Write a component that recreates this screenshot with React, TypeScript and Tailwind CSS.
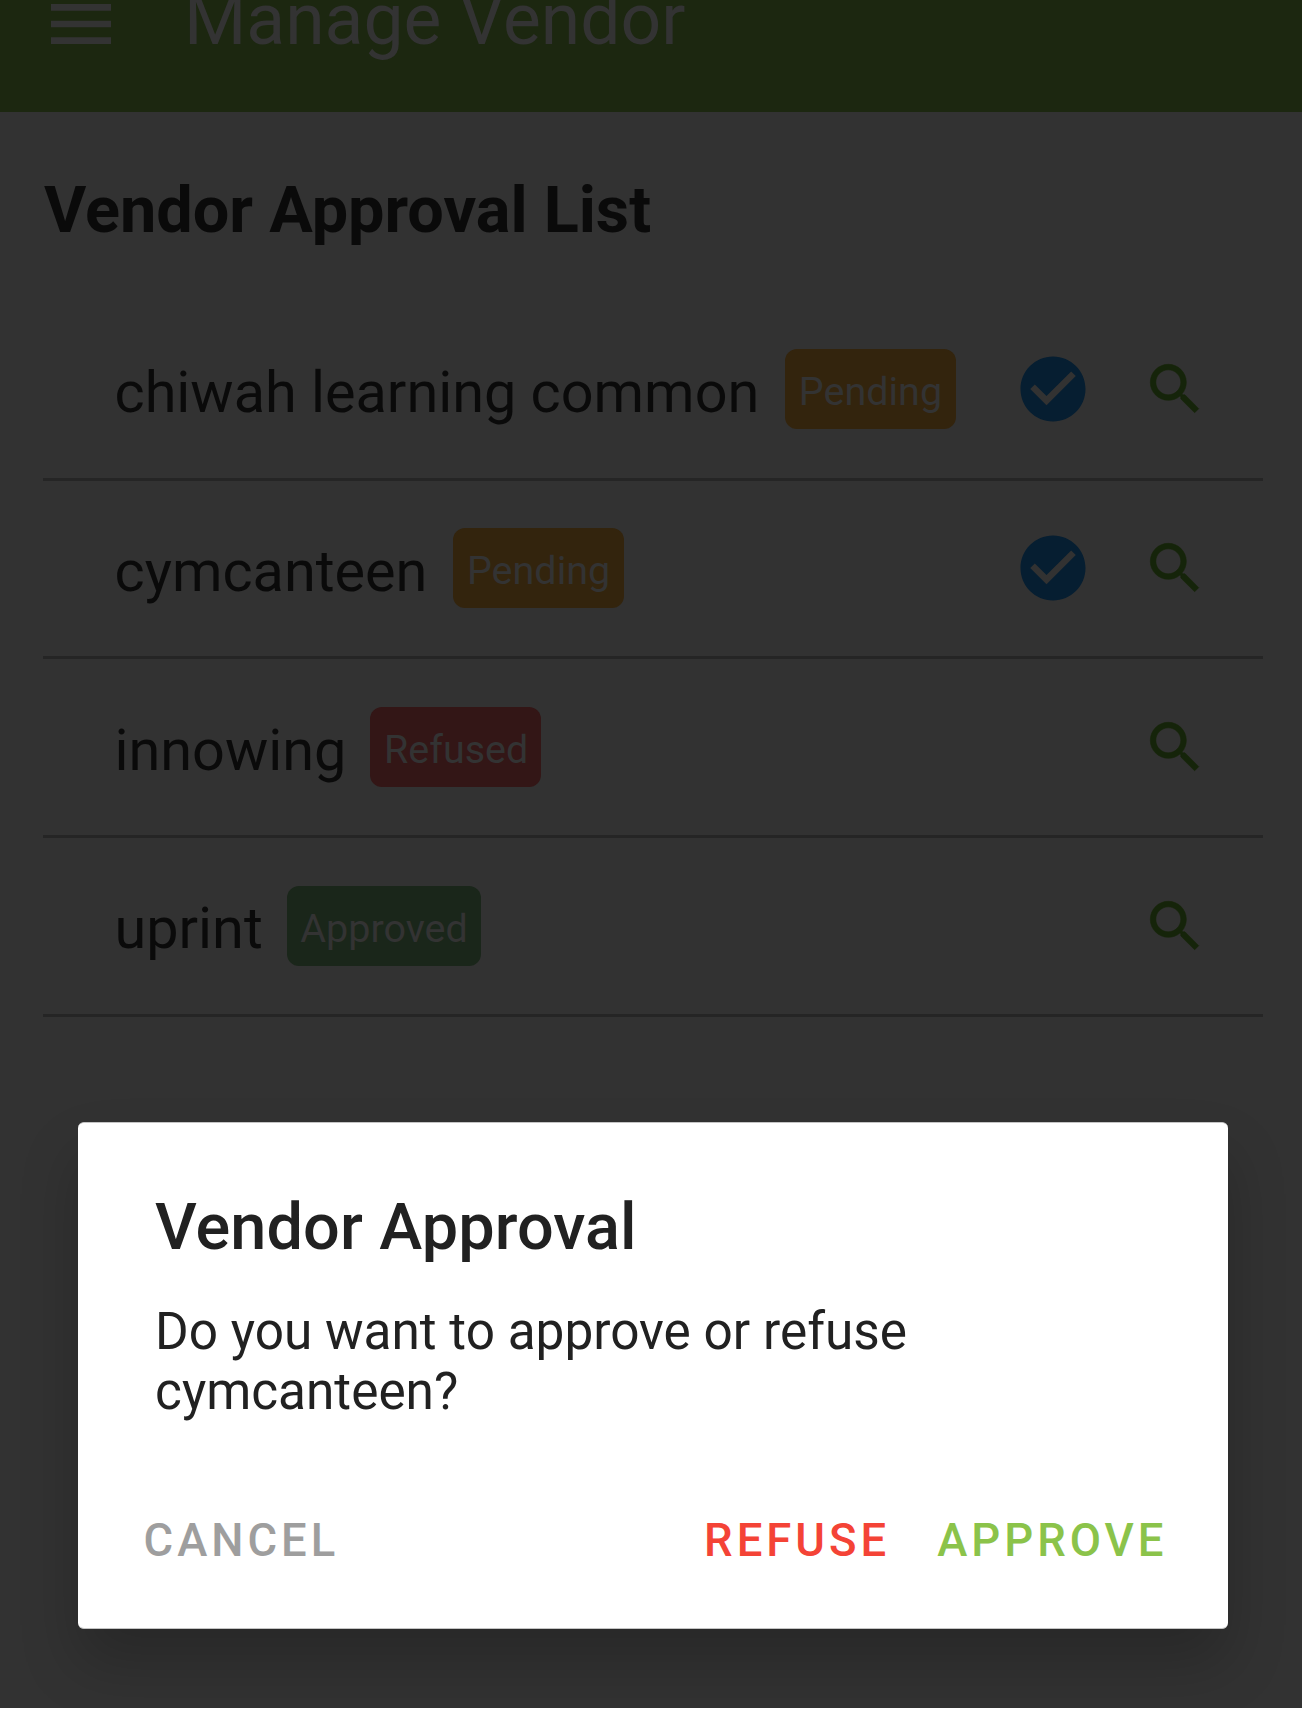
type Status = 'Pending' | 'Refused' | 'Approved';

const vendors: { name: string; status: Status }[] = [
  { name: 'chiwah learning common', status: 'Pending' },
  { name: 'cymcanteen', status: 'Pending' },
  { name: 'innowing', status: 'Refused' },
  { name: 'uprint', status: 'Approved' },
];

const badgeStyles: Record<Status, string> = {
  Pending: 'ml-[26px] w-[171px] bg-[#33240d]',
  Refused: 'ml-[24px] w-[171px] bg-[#331616]',
  Approved: 'ml-[24px] w-[194px] bg-[#1a261a]',
};

function MenuIcon() {
  return (
    <svg viewBox="0 0 24 24" className="size-20 shrink-0 fill-[#333333]">
      <path d="M3 18h18v-2H3v2zm0-5h18v-2H3v2zm0-7v2h18V6H3z" />
    </svg>
  );
}

function CheckCircleIcon() {
  return (
    <svg viewBox="0 0 24 24" className="size-[78px] shrink-0 fill-[#061e31]">
      <path d="M12 2C6.48 2 2 6.48 2 12s4.48 10 10 10 10-4.48 10-10S17.52 2 12 2zm-2 15l-5-5 1.41-1.41L10 14.17l7.59-7.59L19 8l-9 9z" />
    </svg>
  );
}

function SearchIcon() {
  return (
    <svg viewBox="0 0 24 24" className="size-[66.5px] shrink-0 fill-[#15240a] stroke-[#15240a] stroke-[0.2]">
      <path d="M15.5 14h-.79l-.28-.27C15.41 12.59 16 11.11 16 9.5 16 5.91 13.09 3 9.5 3S3 5.91 3 9.5 5.91 16 9.5 16c1.61 0 3.09-.59 4.23-1.57l.27.28v.79l5 4.99L20.49 19l-4.99-5zm-6 0C7.01 14 5 11.99 5 9.5S7.01 5 9.5 5 14 7.01 14 9.5 11.99 14 9.5 14z" />
    </svg>
  );
}

function VendorRow({ name, status }: { name: string; status: Status }) {
  return (
    <li className="flex h-[178.8px] items-center border-b-[3px] border-[#252525] pr-[54px] pb-[0.6px] pl-[71.5px]">
      <span className="pt-[7px] text-[57.6px] leading-[68px] whitespace-nowrap text-[#0a0a0a]">{name}</span>
      <span
        className={`h-20 rounded-[12px] pt-[5px] pl-[13.5px] text-[39.5px] leading-[75px] text-[#333333] ${badgeStyles[status]}`}
      >
        {status}
      </span>
      <div className="ml-auto flex items-center gap-[50.5px]">
        {status === 'Pending' && <CheckCircleIcon />}
        <SearchIcon />
      </div>
    </li>
  );
}

function ApprovalDialog() {
  return (
    <div
      role="dialog"
      className="absolute top-[1122px] left-[78px] h-[507px] w-[1150px] rounded-[6px] border-y border-[#c4c4c4] bg-white px-[77px] pt-[66px] shadow-[0_34px_60px_0_rgba(0,0,0,0.2)]"
    >
      <h2 className="text-[64.8px] leading-[76px] font-medium tracking-[0.1px] text-[#212121]">Vendor Approval</h2>
      <p className="mt-[36.5px] w-[900px] text-[51.35px] leading-[60px] text-[#212121]">
        Do you want to approve or refuse cymcanteen?
      </p>
      <div className="mt-[89.5px] -mr-[16.5px] -ml-[11.5px] flex text-[45.4px] leading-[60px] font-medium tracking-[4px]">
        <button className="text-[#9e9e9e]">CANCEL</button>
        <div className="ml-auto flex gap-[47px]">
          <button className="text-[#f44336]">REFUSE</button>
          <button className="text-[#8bc34a]">APPROVE</button>
        </div>
      </div>
    </div>
  );
}

export default function App() {
  return (
    <div className="h-[1716px] w-[1310px] overflow-hidden bg-white font-['Roboto',sans-serif]">
      <div className="relative h-[1708px] w-[1302px] overflow-hidden bg-[#323232]">
        <header className="flex h-[111.5px] items-start overflow-hidden bg-[#1c2710] pl-[41.4px]">
          <div className="-mt-[16.5px] flex h-20 items-center">
            <MenuIcon />
            <h1 className="ml-[62.6px] pb-[7px] text-[71.4px] leading-[80px] text-[#333333]">Manage Vendor</h1>
          </div>
        </header>
        <main className="pr-[39.5px] pl-[43px]">
          <h2 className="pt-[60.5px] pl-px text-[64.8px] leading-[76px] font-bold text-[#0a0a0a]">
            Vendor Approval List
          </h2>
          <ul className="mt-[53.9px]">
            {vendors.map((vendor) => (
              <VendorRow key={vendor.name} {...vendor} />
            ))}
          </ul>
        </main>
        <ApprovalDialog />
      </div>
    </div>
  );
}
